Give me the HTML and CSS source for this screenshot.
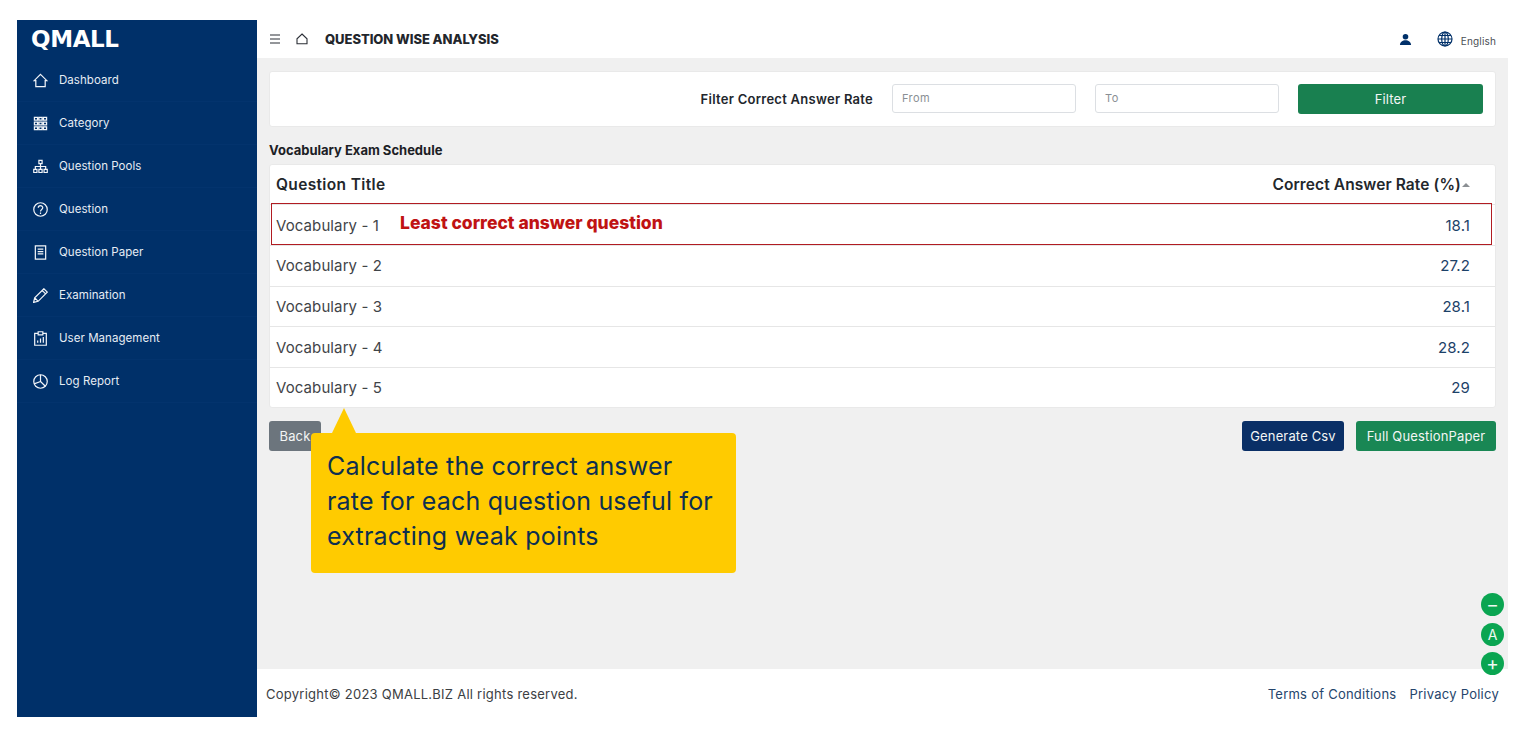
FILE: index.html
```html
<!DOCTYPE html>
<html lang="en">
<head>
<meta charset="utf-8">
<title>Question Wise Analysis</title>
<link rel="stylesheet" href="styles.css">
</head>
<body>
<div class="app">
  <aside class="sidebar">
    <div class="logo">QMALL</div>
    <nav class="nav">
      <a class="nav-item"><svg class="nav-icon" viewBox="0 0 16 16"><path d="M8 1.500 14.800 8.200H13V14.500H3V8.200H1.200Z"/></svg>Dashboard</a>
      <a class="nav-item"><svg class="nav-icon" viewBox="0 0 16 16"><path d="M1.500 1.500h3.400v2.800H1.500zM6.300 1.500h3.400v2.800H6.300zM11.100 1.500h3.400v2.800h-3.400zM1.500 6.600h3.400v2.800H1.500zM6.300 6.600h3.400v2.800H6.300zM11.100 6.600h3.400v2.800h-3.400zM1.500 11.700h3.400v2.800H1.500zM6.300 11.700h3.400v2.800H6.300zM11.100 11.700h3.400v2.800h-3.400z"/></svg>Category</a>
      <a class="nav-item"><svg class="nav-icon" viewBox="0 0 16 16"><path d="M6.300 1.500h3.400v3.400H6.300zM.8 11h3.400v3.400H.8zM6.300 11h3.400v3.400H6.300zM11.800 11h3.400v3.400h-3.400zM8 4.900V11M2.500 11V8h11v3"/></svg>Question Pools</a>
      <a class="nav-item"><svg class="nav-icon" viewBox="0 0 16 16"><circle cx="8" cy="8" r="7.200"/><path d="M5.600 6.200C5.600 3.200 10.400 3.200 10.400 6.200 10.400 8 8 8 8 10M8 11.200v1.500"/></svg>Question</a>
      <a class="nav-item"><svg class="nav-icon" viewBox="0 0 16 16"><path d="M2.500 1h11v14h-11zM5 4.500h6M5 7h6M5 9.500h6"/></svg>Question Paper</a>
      <a class="nav-item"><svg class="nav-icon" viewBox="0 0 16 16"><path d="M.6 15.400l1.200-5L11.600.8l3.600 3.600-9.700 9.800zM1.800 10.400l3.700 3.800M9.800 2.600l3.600 3.600"/></svg>Examination</a>
      <a class="nav-item"><svg class="nav-icon" viewBox="0 0 16 16"><path d="M5.500 2.500H1.800v12.700h12.400V2.500h-3.700M5.500.8h5v3.400h-5zM5 12.500V10M8 12.500V8M11 12.500V6.500"/></svg>User Management</a>
      <a class="nav-item"><svg class="nav-icon" viewBox="0 0 16 16"><circle cx="8" cy="8" r="7.200"/><path d="M8 .8V8l5.200 5M8 8l-6.800 2.500"/></svg>Log Report</a>
    </nav>
  </aside>
  <div class="main">
    <header class="topbar">
      <svg class="top-icon" viewBox="0 0 12 12"><path d="M1 2h10M1 6h10M1 10h10"/></svg>
      <svg class="top-icon home" viewBox="0 0 12 12"><path d="M6 1 11 5.800V10.800H1V5.800Z"/></svg>
      <h1 class="page-title">QUESTION WISE ANALYSIS</h1>
      <div class="top-right">
        <svg class="user-icon" viewBox="0 0 14 14"><circle cx="7" cy="4" r="3"/><path d="M1 13c0-7 12-7 12 0z"/></svg>
        <svg class="globe-icon" viewBox="0 0 16 16"><circle cx="8" cy="8" r="7"/><ellipse cx="8" cy="8" rx="3.300" ry="7"/><path d="M8 1v14M1 8h14M2 4.500h12M2 11.500h12"/></svg>
        <span class="lang">English</span>
      </div>
    </header>
    <main class="content">
      <section class="filter-card">
        <label class="filter-label">Filter Correct Answer Rate</label>
        <div class="field">From</div>
        <div class="field">To</div>
        <button class="btn btn-filter">Filter</button>
      </section>
      <h2 class="sub-title">Vocabulary Exam Schedule</h2>
      <section class="table-card">
        <div class="row head"><span class="title-head">Question Title</span><span class="rate-head">Correct Answer Rate (%)<i class="caret"></i></span></div>
        <div class="row first"><span>Vocabulary - 1</span><span class="rate">18.1</span></div>
        <div class="row"><span>Vocabulary - 2</span><span class="rate">27.2</span></div>
        <div class="row"><span>Vocabulary - 3</span><span class="rate">28.1</span></div>
        <div class="row"><span>Vocabulary - 4</span><span class="rate">28.2</span></div>
        <div class="row last"><span>Vocabulary - 5</span><span class="rate">29</span></div>
      </section>
      <div class="actions">
        <button class="btn btn-back">Back</button>
        <div class="actions-right">
          <button class="btn btn-navy">Generate Csv</button>
          <button class="btn btn-green">Full QuestionPaper</button>
        </div>
      </div>
    </main>
    <footer class="footer">
      <span>Copyright© 2023 QMALL.BIZ All rights reserved.</span>
      <div class="footer-links"><a>Terms of Conditions</a><a>Privacy Policy</a></div>
    </footer>
    <div class="highlight"></div>
    <div class="least">Least correct answer question</div>
    <div class="callout">Calculate the correct answer<br>rate for each question useful for<br>extracting weak points</div>
    <div class="zoom-tools">
      <span class="zoom-btn sign">−</span>
      <span class="zoom-btn">A</span>
      <span class="zoom-btn sign">+</span>
    </div>
  </div>
</div>
</body>
</html>
```
FILE: styles.css
```css
* { box-sizing: border-box; }
html, body { height: 100%; }
body {
  margin: 0;
  padding: 20px 17px;
  background: #fff;
  font-family: Inter, "Liberation Sans", sans-serif;
  color: #212529;
  overflow: hidden;
}
.app { display: flex; height: 697px; }

.sidebar { width: 240px; flex: none; background: #003069; color: #e6ecf4; }
.logo {
  height: 39px;
  padding-left: 14px;
  font: 700 23px/38px "DejaVu Sans", sans-serif;
  letter-spacing: -0.4px;
  color: #fff;
}
.nav { display: flex; flex-direction: column; }
.nav-item {
  display: flex;
  align-items: center;
  height: 43px;
  padding-left: 16px;
  font-size: 11.500px;
  letter-spacing: 0.05px;
  border-bottom: 1px solid #03336d;
}
.nav-icon {
  width: 15px;
  height: 15px;
  margin-right: 11px;
  fill: none;
  stroke: #f2f5f9;
  stroke-width: 1.300;
}

.main { position: relative; flex: 1; display: flex; flex-direction: column; min-width: 0; background: #f0f0f0; }
.topbar { display: flex; align-items: center; height: 38px; padding: 0 12px; background: #fff; }
.top-icon { width: 12px; height: 12px; fill: none; stroke: #2b2f36; stroke-width: 1.100; }
.top-icon.home { margin-left: 15px; }
.page-title { margin: 0 0 0 17px; font-size: 13px; font-weight: 800; letter-spacing: -0.05px; color: #22262c; }
.top-right { display: flex; align-items: center; margin-left: auto; }
.user-icon { width: 13px; height: 13px; margin-right: 1px; fill: #003069; }
.globe-icon { width: 16px; height: 16px; margin-left: 24px; fill: none; stroke: #003069; stroke-width: 1.200; }
.lang { margin: 3px 0 0 8px; font-size: 10px; letter-spacing: 0.15px; color: #4a4f55; }

.content { flex: 1; padding: 13px 12px 0; }
.filter-card {
  display: flex;
  align-items: center;
  justify-content: flex-end;
  gap: 19px;
  height: 56px;
  padding: 0 12px 0 0;
  background: #fff;
  border: 1px solid #e9e9e9;
  border-radius: 3px;
}
.filter-label { font-size: 13px; font-weight: 600; letter-spacing: 0.27px; color: #22262c; }
.field {
  width: 184px;
  height: 29px;
  margin-bottom: 2px;
  padding: 0 9px;
  font-size: 11px;
  line-height: 27px;
  letter-spacing: 0.4px;
  color: #8a8f94;
  background: #fff;
  border: 1px solid #dcdfe3;
  border-radius: 3px;
}
.btn {
  height: 30px;
  padding: 0;
  border: 0;
  border-radius: 3px;
  font-family: inherit;
  font-size: 13px;
  letter-spacing: 0.15px;
  color: #f3f6f5;
}
.btn-filter { width: 185px; background: #198050; }
.sub-title { margin: 15px 0 6px; font-size: 13px; line-height: 16px; font-weight: 700; color: #1c2025; }
.table-card { background: #fff; border: 1px solid #e9e9e9; border-radius: 3px; }
.row {
  display: flex;
  justify-content: space-between;
  align-items: center;
  height: 40.700px;
  padding: 0 25px 0 6px;
  font-size: 15px;
  letter-spacing: 0.1px;
  color: #3f4448;
  border-top: 1px solid #e6e6e6;
}
.row.head { height: 39px; border-top: 0; padding-right: 34px; font-size: 15.500px; font-weight: 600; color: #23272c; }
.row.first { height: 41px; }
.row.last { height: 40px; }
.title-head { letter-spacing: 0.35px; }
.rate { color: #1c4168; }
.rate-head { position: relative; }
.caret {
  position: absolute;
  right: -9px;
  top: 8px;
  border: 4px solid transparent;
  border-top: 0;
  border-bottom-color: #8b8f93;
}
.actions { display: flex; justify-content: space-between; margin-top: 13px; }
.actions-right { display: flex; gap: 12px; }
.btn-back { width: 52px; background: #6c757d; }
.btn-navy { width: 102px; background: #0a2f66; }
.btn-green { width: 140px; background: #198754; }

.footer {
  display: flex;
  justify-content: space-between;
  align-items: center;
  height: 48px;
  padding: 2px 9px 0;
  background: #fff;
  font-size: 13px;
  letter-spacing: 0.25px;
  color: #3c4043;
}
.footer-links { display: flex; gap: 13px; color: #25456c; }

.highlight {
  position: absolute;
  left: 14px;
  top: 183px;
  width: 1221px;
  height: 42px;
  border: 1px solid #b11c22;
  pointer-events: none;
}
.least {
  position: absolute;
  left: 143px;
  top: 191px;
  font-size: 17.500px;
  line-height: 24px;
  font-weight: 800;
  color: #c01313;
}
.callout {
  position: absolute;
  left: 54px;
  top: 413px;
  width: 425px;
  height: 140px;
  padding: 16px 0 0 16px;
  background: #ffcb00;
  border-radius: 4px;
  font-size: 25px;
  line-height: 35px;
  letter-spacing: 0.2px;
  white-space: nowrap;
  color: #0d2f50;
}
.callout::before {
  content: "";
  position: absolute;
  left: 21px;
  top: -25px;
  border-left: 12.500px solid transparent;
  border-right: 12.500px solid transparent;
  border-bottom: 25px solid #ffcb00;
}
.zoom-tools {
  position: absolute;
  right: 4px;
  top: 573px;
  display: flex;
  flex-direction: column;
  gap: 6.500px;
}
.zoom-btn {
  display: flex;
  align-items: center;
  justify-content: center;
  width: 23px;
  height: 23px;
  border-radius: 50%;
  background: #0aa551;
  color: #eef8f2;
  font-size: 14px;
  font-weight: 400;
}
.zoom-btn.sign { font-size: 19px; line-height: 1; }
```
